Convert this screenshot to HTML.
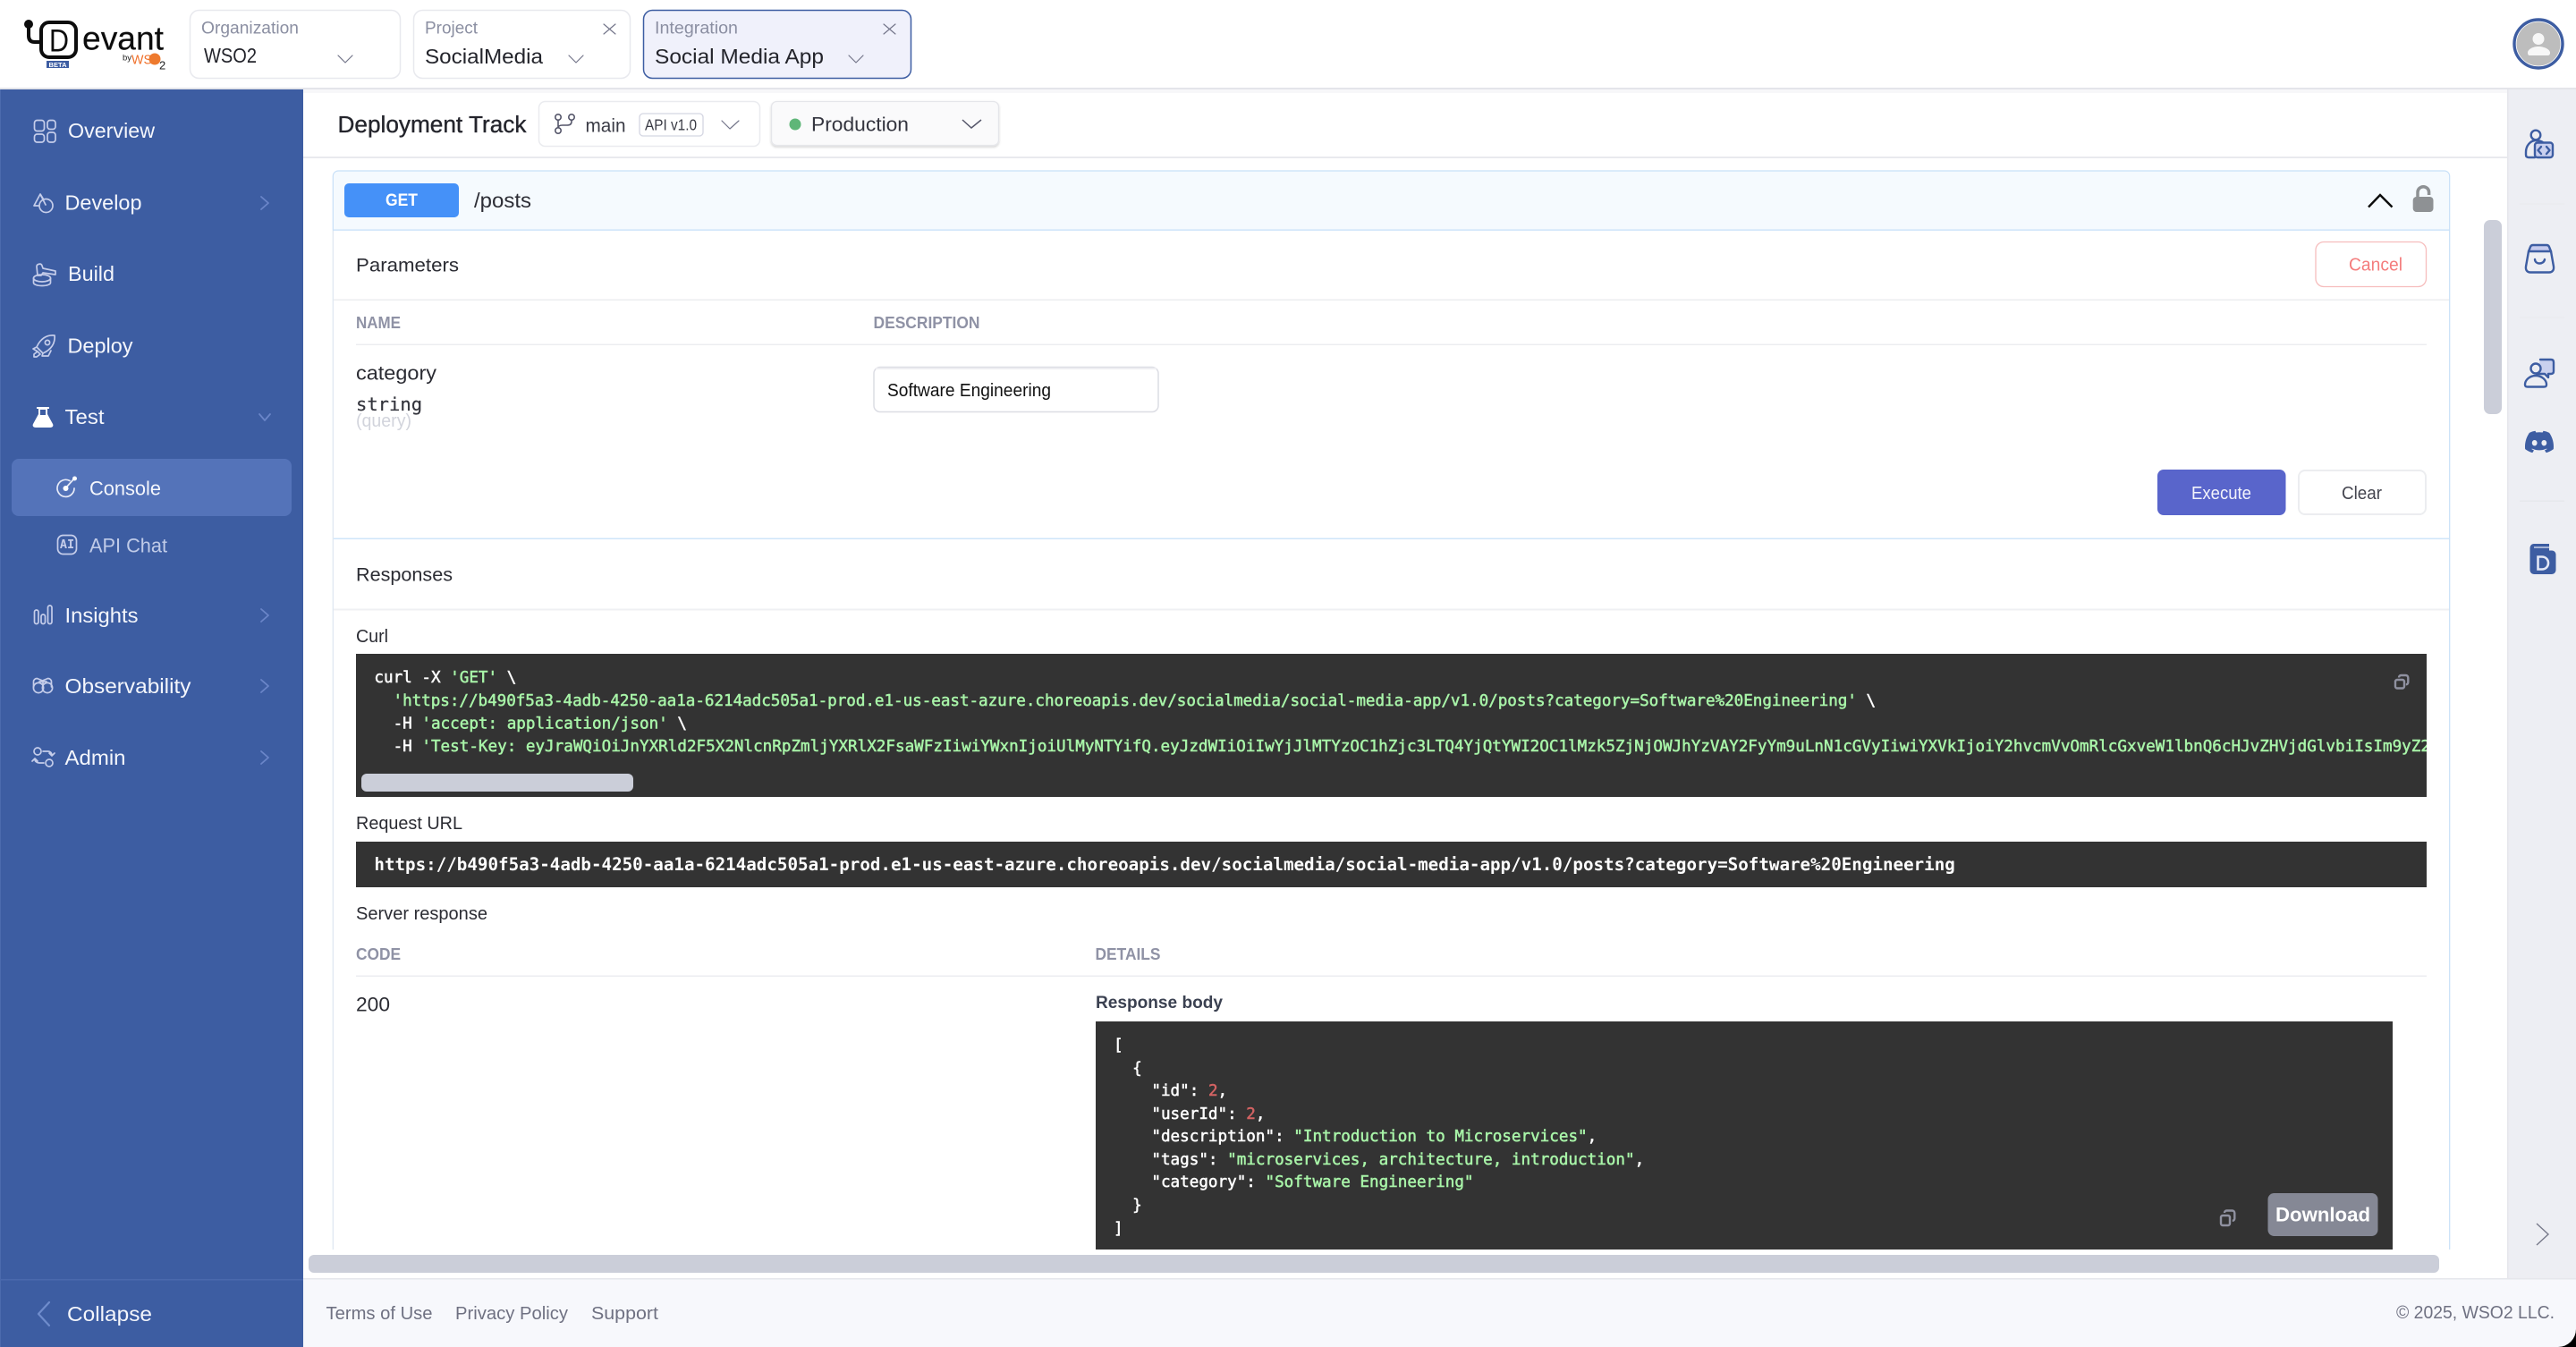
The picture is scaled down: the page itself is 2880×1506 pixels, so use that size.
<!DOCTYPE html>
<html lang="en"><head><meta charset="utf-8"><title>Devant Console</title>
<style>
html,body{margin:0;padding:0;width:2880px;height:1506px;overflow:hidden;background:#fff}
svg{display:block;position:absolute;left:0;top:0}
text{font-family:"Liberation Sans",sans-serif;dominant-baseline:central;white-space:pre}
.mono{font-family:"DejaVu Sans Mono","Liberation Mono",monospace;font-size:17.6px}
.w{fill:#fff}.g{fill:#a8f4a8}.r{fill:#d36363}
.si{fill:none;stroke:#c5cdea;stroke-width:1.7;stroke-linecap:round;stroke-linejoin:round}
.ri{fill:none;stroke:#3d5da2;stroke-width:2.4;stroke-linecap:round;stroke-linejoin:round}
.ch{fill:none;stroke:#6a85c8;stroke-width:1.8;stroke-linecap:round;stroke-linejoin:round}
.tc{fill:none;stroke:#74768a;stroke-width:1.2;stroke-linecap:round;stroke-linejoin:round}
.nav{font-size:23.5px;fill:#f4f6fc}
.lb{font-size:19px;fill:#8b8fa2}
.val{font-size:23px;fill:#23242b}
.bd{font-size:21px;fill:#2b2c33}
.th{font-size:18px;font-weight:bold;fill:#8f92a5}
.ft{font-size:20px;fill:#6f7182}
</style></head><body>
<svg width="2880" height="1506" viewBox="0 0 2880 1506" xmlns="http://www.w3.org/2000/svg">
<defs>
<clipPath id="curl"><rect x="398" y="731" width="2315" height="160"/></clipPath>
<filter id="sh" x="-5%" y="-20%" width="110%" height="150%"><feDropShadow dx="0" dy="1.5" stdDeviation="1.2" flood-color="#000" flood-opacity=".18"/></filter>
</defs>
<rect width="2880" height="1506" fill="#fff"/>

<!-- Top bar -->
<rect x="0" y="98" width="2880" height="2" fill="#e4e5ea"/>
<rect x="339" y="100" width="2541" height="4" fill="#f7f7f9"/>
<!-- Logo -->
<g fill="none" stroke="#0d0d0d" stroke-width="4" stroke-linecap="round">
<path d="M32 28V40Q32 47 39 47H45"/><rect x="46" y="25" width="39" height="39" rx="9"/></g>
<circle cx="32" cy="27" r="5" fill="#0d0d0d"/>
<text x="55" y="46" font-size="35" fill="#0d0d0d" textLength="22" lengthAdjust="spacingAndGlyphs">D</text>
<text x="92" y="43" font-size="37" fill="#0d0d0d" stroke="#0d0d0d" stroke-width=".2" textLength="91" lengthAdjust="spacingAndGlyphs">evant</text>
<rect x="52" y="68" width="25" height="8" fill="#3d5da2"/>
<text x="64.5" y="72.3" font-size="7.5" font-weight="bold" fill="#fff" text-anchor="middle" textLength="20" lengthAdjust="spacing">BETA</text>
<text x="137" y="65" font-size="9.5" fill="#222">by</text>
<text x="147" y="67" font-size="15" fill="#f0702a" textLength="23" lengthAdjust="spacingAndGlyphs">WS</text>
<circle cx="173" cy="66" r="6.5" fill="#ee7a2e"/>
<text x="178" y="73" font-size="13" fill="#222">2</text>

<!-- selectors -->
<rect x="212.500" y="11.500" width="235" height="76" rx="10" fill="#fff" stroke="#e8e9ee" stroke-width="1.500"/>
<rect x="462.500" y="11.500" width="242" height="76" rx="10" fill="#fff" stroke="#e8e9ee" stroke-width="1.500"/>
<rect x="719.500" y="11.500" width="299" height="76" rx="10" fill="#f0f1fb" stroke="#3d5da2" stroke-width="1.500"/>
<text x="225" y="32" class="lb" textLength="109" lengthAdjust="spacingAndGlyphs">Organization</text>
<text x="228" y="62" class="val" textLength="59" lengthAdjust="spacingAndGlyphs">WSO2</text>
<path class="tc" d="M378 62L386 70L394 62"/>
<text x="475" y="63" class="val" textLength="132" lengthAdjust="spacingAndGlyphs">SocialMedia</text>
<text x="475" y="32" class="lb" textLength="59" lengthAdjust="spacingAndGlyphs">Project</text>
<path class="tc" d="M636 62L644 70L652 62"/>
<path class="tc" d="M675 27L688 38M688 27L675 38"/>
<text x="732" y="32" class="lb" textLength="93" lengthAdjust="spacingAndGlyphs">Integration</text>
<text x="732" y="63" class="val" textLength="189" lengthAdjust="spacingAndGlyphs">Social Media App</text>
<path class="tc" d="M949 62L957 70L965 62"/>
<path class="tc" d="M988 27L1001 38M1001 27L988 38"/>

<!-- Avatar -->
<circle cx="2838" cy="49" r="27" fill="#fff" stroke="#3d5da2" stroke-width="3.400"/>
<circle cx="2838" cy="49" r="24.500" fill="#bdbdbd"/>
<circle cx="2838" cy="43.500" r="6.500" fill="#f7f7f7"/>
<path d="M2826 59c0-4 6-7 12-7s13 3 13 7c0 2-1 3-3 3h-20c-1 0-2-1-2-3z" fill="#f7f7f7"/>

<!-- Sidebar -->
<rect x="0" y="100" width="339" height="1406" fill="#3d5da2"/>
<rect x="0" y="100" width="1" height="1406" fill="#4b6aad"/>
<rect x="13" y="513" width="313" height="64" rx="8" fill="#5473b9"/>
<rect x="0" y="1430" width="339" height="1.500" fill="#4a69ad"/>

<g class="si">
<rect x="38.500" y="134.500" width="11" height="12" rx="3"/><rect x="53" y="134.500" width="9" height="10" rx="3"/>
<rect x="38.500" y="150" width="11" height="9" rx="3"/><rect x="53" y="148" width="9" height="11" rx="3"/>
</g>
<text x="76" y="146" class="nav" textLength="97" lengthAdjust="spacingAndGlyphs">Overview</text>

<g class="si"><path d="M45 217L38 230H53Z"/><circle cx="51.500" cy="230" r="7.500" fill="#3d5da2"/><path d="M45.200 217.500L51 229"/></g>
<text x="72.500" y="226.500" class="nav" textLength="86" lengthAdjust="spacingAndGlyphs">Develop</text>
<path class="ch" d="M292 220L300 227L292 234"/>

<g class="si"><path d="M41 298c0-3 5-4 6-1l1 3 14 3v4l-14-2-2 3h-4z"/><ellipse cx="47" cy="311" rx="9.500" ry="4"/><path d="M37.500 311v5c0 2 4 3.500 9.500 3.500s9.500-1.500 9.500-3.500v-5"/></g>
<text x="76" y="306" class="nav" textLength="52" lengthAdjust="spacingAndGlyphs">Build</text>

<g class="si"><path d="M61 375c-9-1-16 4-20 13l7 7c9-4 14-11 13-20z"/><circle cx="53" cy="383" r="2.600"/><path d="M41 388l-4 2 5 3M48 395l-1 3 7 0 3-6M38 396l4-3 3 3-4 3h-3z"/></g>
<text x="75.500" y="386.500" class="nav" textLength="73" lengthAdjust="spacingAndGlyphs">Deploy</text>

<path d="M41 455h14v2h-2v6l6 11c1 2 0 4-3 4H40c-3 0-4-2-3-4l6-11v-6h-2z" fill="#fff"/>
<rect x="45" y="458" width="6" height="6" fill="#3d5da2"/>
<text x="72.500" y="466" class="nav" textLength="44" lengthAdjust="spacingAndGlyphs">Test</text>
<path class="ch" d="M290 463L296 470L302 463"/>

<g class="si" style="stroke:#e6eaf7"><path d="M78 537.500A9.500 9.500 0 1 0 83 546"/><path d="M74 545L83 535"/></g>
<circle cx="73.500" cy="546" r="3" fill="#fff"/><circle cx="83.500" cy="535" r="2.500" fill="#fff"/>
<text x="100" y="546" class="nav" style="font-size:22.500px" textLength="80" lengthAdjust="spacingAndGlyphs">Console</text>

<rect x="64.500" y="598.500" width="21" height="21" rx="6" class="si"/>
<text x="75" y="609" font-weight="bold" class="mono" style="font-size:13.500px;fill:#c5cdea" text-anchor="middle">AI</text>
<text x="100" y="610" class="nav" style="font-size:22.500px;fill:#c0cbe8" textLength="87" lengthAdjust="spacingAndGlyphs">API Chat</text>

<g class="si"><rect x="38.500" y="682" width="4.500" height="15.500" rx="2.200"/><rect x="46" y="687" width="4.500" height="10.500" rx="2.200"/><rect x="53.500" y="677" width="4.500" height="20.500" rx="2.200"/></g>
<text x="72.500" y="688" class="nav" textLength="82" lengthAdjust="spacingAndGlyphs">Insights</text>
<path class="ch" d="M292 681L300 688L292 695"/>

<g class="si"><circle cx="43" cy="769" r="5.600"/><circle cx="53" cy="769" r="5.600"/><path d="M37.500 768V762c0-2 2-3.500 4-3.500l6 2.500 6-2.500c2 0 4 1.500 4 3.500v6M44 762h8M48 762v3"/></g>
<text x="72.500" y="767" class="nav" textLength="141" lengthAdjust="spacingAndGlyphs">Observability</text>
<path class="ch" d="M292 760L300 767L292 774"/>

<g class="si"><circle cx="42" cy="840" r="4"/><circle cx="55" cy="853" r="4"/><path d="M48 840h6c2 0 4 2 4 4v1M55 842l3 3 3-3M49 853h-5c-3 0-5-2-5-4v-1M36 851l3-3 3 3"/></g>
<text x="72.500" y="847" class="nav" textLength="68" lengthAdjust="spacingAndGlyphs">Admin</text>
<path class="ch" d="M292 840L300 847L292 854"/>

<path d="M55 1456L43 1469L55 1482" fill="none" stroke="#6f8ccc" stroke-width="2.200" stroke-linecap="round" stroke-linejoin="round"/>
<text x="75" y="1469" class="nav" textLength="95" lengthAdjust="spacingAndGlyphs">Collapse</text>

<!-- Deployment header -->
<rect x="339" y="175" width="2464" height="2" fill="#e9eaee"/>
<text x="377.500" y="140" font-size="25.500" fill="#24252c" stroke="#24252c" stroke-width=".35" textLength="211" lengthAdjust="spacingAndGlyphs">Deployment Track</text>
<rect x="602.500" y="113.500" width="247" height="50" rx="7" fill="#fff" stroke="#eaebef" stroke-width="1.500"/>
<g fill="none" stroke="#55566a" stroke-width="1.600"><circle cx="624" cy="131" r="3.200"/><circle cx="639" cy="131" r="3.200"/><circle cx="624" cy="146" r="3.200"/><path d="M624 134.500V142.500M639 134.500V136c0 3-2 4-5 4h-5c-3 0-5 1-5 3"/></g>
<text x="654.500" y="141" font-size="21" fill="#3a3b45" textLength="45" lengthAdjust="spacingAndGlyphs">main</text>
<rect x="715" y="127" width="71" height="25" rx="4" fill="#fff" stroke="#d4d6e2" stroke-width="1.300"/>
<text x="721" y="139.500" font-size="17.500" fill="#3a3b45" textLength="58" lengthAdjust="spacingAndGlyphs">API v1.0</text>
<path class="tc" d="M807 135L816 144L826 135"/>
<rect x="862.500" y="113.500" width="254" height="49" rx="6" fill="#fafafb" stroke="#e5e6ea" stroke-width="1.300" filter="url(#sh)"/>
<circle cx="889" cy="139" r="6.500" fill="#5fb678"/>
<text x="907" y="139" font-size="22" fill="#34353f" textLength="109" lengthAdjust="spacingAndGlyphs">Production</text>
<path d="M1076 134L1086 143L1097 134" fill="none" stroke="#55566a" stroke-width="1.500"/>

<!-- Card -->
<path d="M372.300 1397V197a6 6 0 0 1 6-6H2732.700a6 6 0 0 1 6 6V1397" fill="#fff" stroke="none"/>
<path d="M372.300 257V197a6 6 0 0 1 6-6H2732.700a6 6 0 0 1 6 6V257Z" fill="#f5fafe"/>
<path d="M372.300 257V197a6 6 0 0 1 6-6H2732.700a6 6 0 0 1 6 6V1397" fill="none" stroke="#c8e0f8" stroke-width="1.200"/>
<path d="M372.300 257V1397" fill="none" stroke="#dde6f0" stroke-width="1.200"/>
<rect x="372" y="256.500" width="2367" height="1.300" fill="#c8e0f8"/>
<rect x="385" y="205" width="128" height="38" rx="5" fill="#4591f8"/>
<text x="449" y="224.500" font-size="19" font-weight="bold" fill="#fff" text-anchor="middle" textLength="36" lengthAdjust="spacingAndGlyphs">GET</text>
<text x="530" y="224" font-size="23" fill="#2d2e36" textLength="64" lengthAdjust="spacingAndGlyphs">/posts</text>
<path d="M2648 231.500L2661 218L2674.500 231.500" fill="none" stroke="#0c0c0c" stroke-width="2.400"/>
<rect x="2697.700" y="220" width="22.800" height="17" rx="4" fill="#8e9194"/>
<path d="M2703 222v-7a6.300 6.300 0 0 1 12.600 0v3" fill="none" stroke="#8e9194" stroke-width="3.500"/>

<text x="398" y="297" class="bd" textLength="115" lengthAdjust="spacingAndGlyphs">Parameters</text>
<rect x="2589" y="270.500" width="123.500" height="50" rx="9" fill="#fff" stroke="#f6bdbd" stroke-width="1.300"/>
<text x="2626" y="296.500" font-size="20" fill="#f47c7c" textLength="60" lengthAdjust="spacingAndGlyphs">Cancel</text>
<rect x="373" y="334.500" width="2365" height="1.500" fill="#ecedf0"/>
<text x="398" y="361" class="th" textLength="50" lengthAdjust="spacingAndGlyphs">NAME</text>
<text x="976.500" y="361" class="th" textLength="119" lengthAdjust="spacingAndGlyphs">DESCRIPTION</text>
<rect x="398" y="384.500" width="2315" height="1.500" fill="#ecedf0"/>
<text x="398" y="417" class="bd" style="font-size:22px" textLength="90" lengthAdjust="spacingAndGlyphs">category</text>
<text x="398" y="452" class="mono" style="font-size:20.500px;fill:#33343c" stroke="#33343c" stroke-width=".2">string</text>
<text x="398" y="471" font-size="20" fill="#d2d4dc" textLength="62" lengthAdjust="spacingAndGlyphs">(query)</text>
<rect x="977" y="410.500" width="318" height="50" rx="7" fill="#fff" stroke="#dcdde4" stroke-width="1.500"/>
<rect x="979" y="411" width="314" height="2" fill="#eeeef2"/>
<text x="992" y="437" font-size="20" fill="#111" textLength="183" lengthAdjust="spacingAndGlyphs">Software Engineering</text>
<rect x="2412" y="525" width="143.500" height="51" rx="7" fill="#5965cb"/>
<text x="2450" y="552" font-size="20" fill="#f2f3fb" textLength="67" lengthAdjust="spacingAndGlyphs">Execute</text>
<rect x="2570" y="526" width="142" height="49" rx="7" fill="#fff" stroke="#ecedf0" stroke-width="2"/>
<text x="2618" y="552" font-size="20" fill="#44454f" textLength="45" lengthAdjust="spacingAndGlyphs">Clear</text>
<rect x="373" y="601.500" width="2365" height="1.500" fill="#cfe5fa"/>

<text x="398" y="643" class="bd" textLength="108" lengthAdjust="spacingAndGlyphs">Responses</text>
<rect x="373" y="680.500" width="2365" height="2" fill="#eff0f3"/>
<text x="398" y="712" class="bd" style="font-size:20px" textLength="36" lengthAdjust="spacingAndGlyphs">Curl</text>

<rect x="398" y="731" width="2315" height="160" fill="#333"/>
<g clip-path="url(#curl)" stroke-width=".5">
<text x="418.400" y="758" class="mono w" stroke="#fff">curl -X <tspan class="g" stroke="#a8f4a8">'GET'</tspan> \</text>
<text x="418.400" y="784" class="mono g" stroke="#a8f4a8" style="letter-spacing:-.035px">  'https://b490f5a3-4adb-4250-aa1a-6214adc505a1-prod.e1-us-east-azure.choreoapis.dev/socialmedia/social-media-app/v1.0/posts?category=Software%20Engineering'<tspan class="w" stroke="#fff"> \</tspan></text>
<text x="418.400" y="809.500" class="mono w" stroke="#fff">  -H <tspan class="g" stroke="#a8f4a8">'accept: application/json'</tspan> \</text>
<text x="418.400" y="835" class="mono w" stroke="#fff">  -H <tspan class="g" stroke="#a8f4a8">'Test-Key: eyJraWQiOiJnYXRld2F5X2NlcnRpZmljYXRlX2FsaWFzIiwiYWxnIjoiUlMyNTYifQ.eyJzdWIiOiIwYjJlMTYzOC1hZjc3LTQ4YjQtYWI2OC1lMzk5ZjNjOWJhYzVAY2FyYm9uLnN1cGVyIiwiYXVkIjoiY2hvcmVvOmRlcGxveW1lbnQ6cHJvZHVjdGlvbiIsIm9yZ2FuaXphdGlvbiI6eyJ1dWlkIjoi</tspan></text>
</g>
<rect x="404" y="865" width="304" height="20" rx="6" fill="#cbced9"/>
<g fill="none" stroke="#8f91a0" stroke-width="2.400"><rect x="2678" y="760" width="10" height="9.500" rx="2"/><path d="M2682 757.500c0-1.500 1-2.500 2.500-2.500h5c1.700 0 2.800 1 2.800 2.800v5c0 1.500-1 2.500-2.500 2.500"/></g>

<text x="398" y="921" class="bd" style="font-size:20px" textLength="119" lengthAdjust="spacingAndGlyphs">Request URL</text>
<rect x="398" y="941" width="2315" height="51" fill="#333"/>
<text x="418.400" y="966.500" class="mono w" style="font-size:19.200px" font-weight="bold">https://b490f5a3-4adb-4250-aa1a-6214adc505a1-prod.e1-us-east-azure.choreoapis.dev/socialmedia/social-media-app/v1.0/posts?category=Software%20Engineering</text>
<text x="398" y="1022" class="bd" style="font-size:20px" textLength="147" lengthAdjust="spacingAndGlyphs">Server response</text>
<text x="398" y="1067" class="th" textLength="50" lengthAdjust="spacingAndGlyphs">CODE</text>
<text x="1224.500" y="1067" class="th" textLength="73" lengthAdjust="spacingAndGlyphs">DETAILS</text>
<rect x="398" y="1090.500" width="2315" height="1.500" fill="#ecedf0"/>
<text x="398" y="1123" class="bd" style="font-size:22px" textLength="38" lengthAdjust="spacingAndGlyphs">200</text>
<text x="1225" y="1121" font-size="19.500" font-weight="bold" fill="#3b4151" textLength="142" lengthAdjust="spacingAndGlyphs">Response body</text>

<rect x="1225" y="1142" width="1450" height="255" fill="#333"/>
<g stroke-width=".5">
<text x="1245" y="1169" class="mono w" stroke="#fff">[</text>
<text x="1245" y="1195" class="mono w" stroke="#fff">  {</text>
<text x="1245" y="1220" class="mono w" stroke="#fff">    "id": <tspan class="r" stroke="#d36363">2</tspan>,</text>
<text x="1245" y="1246" class="mono w" stroke="#fff">    "userId": <tspan class="r" stroke="#d36363">2</tspan>,</text>
<text x="1245" y="1271" class="mono w" stroke="#fff">    "description": <tspan class="g" stroke="#a8f4a8">"Introduction to Microservices"</tspan>,</text>
<text x="1245" y="1297" class="mono w" stroke="#fff">    "tags": <tspan class="g" stroke="#a8f4a8">"microservices, architecture, introduction"</tspan>,</text>
<text x="1245" y="1322" class="mono w" stroke="#fff">    "category": <tspan class="g" stroke="#a8f4a8">"Software Engineering"</tspan></text>
<text x="1245" y="1348" class="mono w" stroke="#fff">  }</text>
<text x="1245" y="1374" class="mono w" stroke="#fff">]</text>
</g>
<g fill="none" stroke="#8f91a0" stroke-width="2.400"><rect x="2483" y="1359" width="10" height="11" rx="2"/><path d="M2487 1356c0-1.500 1-2.500 2.500-2.500h6c1.700 0 2.800 1 2.800 2.800v6c0 1.500-1 2.500-2.500 2.500"/></g>
<rect x="2535.500" y="1334" width="123" height="48" rx="7" fill="#858895"/>
<text x="2544" y="1358" font-size="22.400" font-weight="bold" fill="#fff" textLength="106" lengthAdjust="spacingAndGlyphs">Download</text>

<!-- scrollbars -->
<rect x="2777" y="246" width="20" height="217" rx="7" fill="#cbced9"/>
<rect x="345" y="1403" width="2382" height="20" rx="6" fill="#cbced9"/>

<!-- Right panel -->
<rect x="2803" y="100" width="77" height="1330" fill="#edeef3"/>
<rect x="2803" y="100" width="1.500" height="1330" fill="#e6e7ec"/>
<rect x="2817" y="227.500" width="50" height="1" fill="#e9eaee"/>
<rect x="2817" y="354.500" width="50" height="1" fill="#e9eaee"/>
<rect x="2817" y="559.500" width="50" height="1.300" fill="#e5e6eb"/>
<g class="ri">
<circle cx="2835" cy="151" r="5.300"/><path d="M2834 176h-7c-2 0-3-1-3-3v-3c0-7 5-13 11-13 4 0 7 1 9 3"/>
<rect x="2834" y="159.500" width="20" height="16.500" rx="3" fill="#c9d0ef"/><path d="M2841 164l-3.500 4 3.500 4M2847 164l3.500 4-3.500 4"/>
</g>
<g class="ri">
<path d="M2827 281l2-5c.5-1.500 1.500-2 3-2h15c1.500 0 2.500.5 3 2l2 5z" fill="#c6cbee"/>
<path d="M2827 281l-3 17c-.5 4 1.500 6.500 5 6.500h21c3.500 0 5.500-2.500 5-6.500l-3-17"/><path d="M2834 290c.5 6 10 6 11 0"/>
</g>
<g class="ri">
<path d="M2840 402h12c2 0 3 1 3 3v10c0 2-1 3-3 3h-3v4l-4-4h-9" fill="#c9d0ee"/>
<circle cx="2835" cy="412" r="5.500" fill="#edeef3"/>
<path d="M2835 420c-7 0-12 5-12 10 0 2 1 2.500 3 2.500h18c2 0 3-.5 3-2.500 0-5-5-10-12-10z" fill="#edeef3"/>
</g>
<g transform="translate(2823 478) scale(1.333)"><path fill="#3d5da2" d="M20.317 4.3698a19.7913 19.7913 0 00-4.8851-1.5152.0741.0741 0 00-.0785.0371c-.211.3753-.4447.8648-.6083 1.2495-1.8447-.2762-3.68-.2762-5.4868 0-.1636-.3933-.4058-.8742-.6177-1.2495a.077.077 0 00-.0785-.037 19.7363 19.7363 0 00-4.8852 1.515.0699.0699 0 00-.0321.0277C.5334 9.0458-.319 13.5799.0992 18.0578a.0824.0824 0 00.0312.0561c2.0528 1.5076 4.0413 2.4228 5.9929 3.0294a.0777.0777 0 00.0842-.0276c.4616-.6304.8731-1.2952 1.226-1.9942a.076.076 0 00-.0416-.1057c-.6528-.2476-1.2743-.5495-1.8722-.8923a.077.077 0 01-.0076-.1277c.1258-.0943.2517-.1923.3718-.2914a.0743.0743 0 01.0776-.0105c3.9278 1.7933 8.18 1.7933 12.0614 0a.0739.0739 0 01.0785.0095c.1202.099.246.1981.3728.2924a.077.077 0 01-.0066.1276 12.2986 12.2986 0 01-1.873.8914.0766.0766 0 00-.0407.1067c.3604.698.7719 1.3628 1.225 1.9932a.076.076 0 00.0842.0286c1.961-.6067 3.9495-1.5219 6.0023-3.0294a.077.077 0 00.0313-.0552c.5004-5.177-.8382-9.6739-3.5485-13.6604a.061.061 0 00-.0312-.0286zM8.02 15.3312c-1.1825 0-2.1569-1.0857-2.1569-2.419 0-1.3332.9555-2.4189 2.157-2.4189 1.2108 0 2.1757 1.0952 2.1568 2.419 0 1.3332-.9555 2.4189-2.1569 2.4189zm7.9748 0c-1.1825 0-2.1569-1.0857-2.1569-2.419 0-1.3332.9554-2.4189 2.1569-2.4189 1.2108 0 2.1757 1.0952 2.1568 2.419 0 1.3332-.946 2.4189-2.1568 2.4189Z"/></g>
<path d="M2833 608h17v7.500h3c2.500 0 4.500 2 4.500 4.500v17c0 3-2 5-5 5h-19c-3 0-5-2-5-5v-24c0-3 2-5 4.500-5z" fill="#3d5da2"/>
<path d="M2833 612h17" stroke="#e4e8f6" stroke-width="1.300"/>
<path d="M2837.500 622.500h4.500c4 0 7 3 7 7s-3 7-7 7h-4.500z" fill="none" stroke="#e4e8f6" stroke-width="2.600"/>
<path d="M2836 1368L2849 1380L2836 1392" fill="none" stroke="#77798a" stroke-width="1.400"/>

<!-- Footer -->
<rect x="339" y="1429" width="2541" height="77" fill="#f7f8fc"/>
<rect x="339" y="1429" width="2541" height="1.500" fill="#e6e7ec"/>
<text x="364.500" y="1469" class="ft" textLength="119" lengthAdjust="spacingAndGlyphs">Terms of Use</text>
<text x="509" y="1469" class="ft" textLength="126" lengthAdjust="spacingAndGlyphs">Privacy Policy</text>
<text x="661" y="1469" class="ft" textLength="75" lengthAdjust="spacingAndGlyphs">Support</text>
<text x="2679" y="1468" class="ft" textLength="177" lengthAdjust="spacingAndGlyphs">© 2025, WSO2 LLC.</text>

<path d="M2880 1486V1506H2860A20 20 0 0 0 2880 1486Z" fill="#000"/>
</svg>
</body></html>
